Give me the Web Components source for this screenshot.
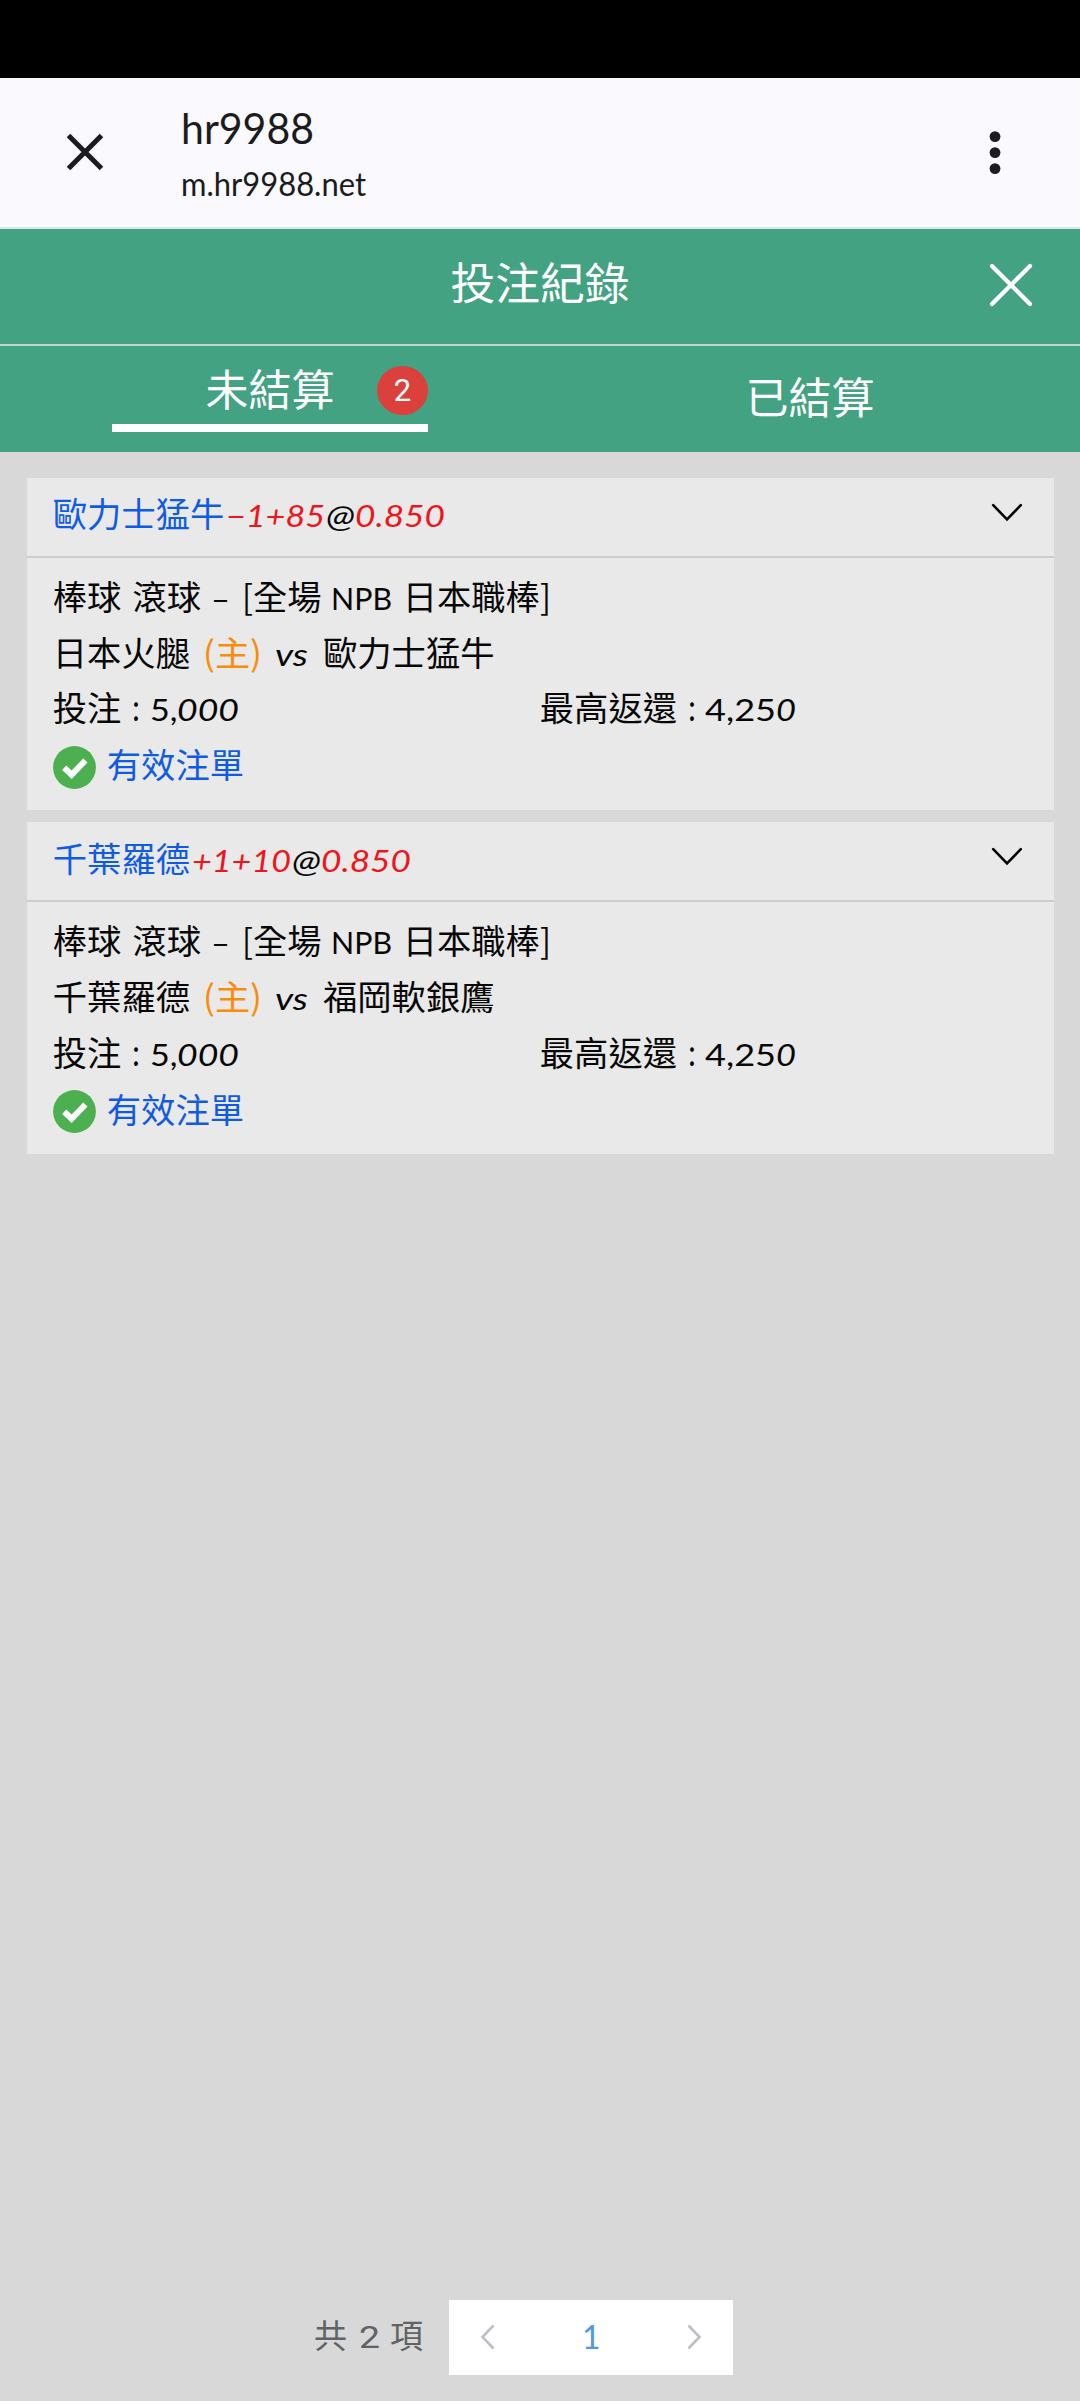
<!DOCTYPE html>
<html lang="zh-Hant">
<head>
<meta charset="utf-8">
<title>投注紀錄</title>
<style>
html,body{margin:0;padding:0}
body{width:1080px;height:2401px;overflow:hidden;background:#d8d8d8;font-family:"Noto Sans CJK TC",sans-serif}
</style>
</head>
<body>
<bet-app></bet-app>
<script>
const define = (name, html, ready) => customElements.define(name, class extends HTMLElement {
  connectedCallback() {
    if (this.shadowRoot) return;
    const t = document.createElement('template');
    t.innerHTML = html;
    this.attachShadow({ mode: 'open' }).append(t.content.cloneNode(true));
    if (ready) ready.call(this, this.shadowRoot);
  }
});

/* A run of text whose glyphs are stretched to the width given by "w". */
define('text-run', `<style>
:host{display:inline-block;white-space:pre;flex:none}
:host([latin]){font-family:Lato,"Noto Sans CJK TC",sans-serif;font-size:31px}
:host([italic]){font-style:italic}
span{display:inline-block;transform-origin:0 50%}
</style><span><slot></slot></span>`, function (root) {
  const w = +this.getAttribute('w');
  const s = root.querySelector('span');
  if (this.hasAttribute('gap')) this.style.marginLeft = this.getAttribute('gap') + 'px';
  if (w) {
    const natural = s.getBoundingClientRect().width;
    this.style.width = w + 'px';
    if (natural) s.style.transform = `scaleX(${w / natural})`;
  }
});

define('browser-bar', `<style>
:host{display:flex;height:149px;background:#f9f9fe;border-bottom:2px solid #d9eae6;color:#1b1b20;align-items:flex-start;box-sizing:content-box}
.close{margin:55px 0 0 66px;width:38px;height:38px}
.t{margin:10px 0 0 76.5px;flex:1;display:flex;flex-direction:column;align-items:flex-start}
.a{font:42.5px/80px Lato,sans-serif;height:80px}
.b{font:32px/40px Lato,sans-serif;height:40px;margin-top:-4px}
.more{margin:53px 79px 0 0;width:12px;height:44px}
svg{display:block}
</style>
<svg class="close" viewBox="0 0 38 38"><path d="M2.5 2.5l33 33M35.5 2.5l-33 33" stroke="#1b1b20" stroke-width="5" fill="none"/></svg>
<div class="t"><text-run class="a" w="133">hr9988</text-run><text-run class="b" w="185">m.hr9988.net</text-run></div>
<svg class="more" viewBox="0 0 12 44"><g fill="#1b1b20"><circle cx="6" cy="5.6" r="5.4"/><circle cx="6" cy="21.6" r="5.4"/><circle cx="6" cy="37.6" r="5.4"/></g></svg>`);

define('title-bar', `<style>
:host{display:grid;grid-template-columns:1fr auto 1fr;align-items:start;height:114.5px;background:#42a281;border-bottom:2.5px solid #c3d6ce;color:#fff}
b{grid-column:2;font:400 44.8px/66px "Noto Sans CJK TC",sans-serif;margin-top:19px}
svg{justify-self:end;width:44px;height:44px;margin:33.5px 47px 0 0}
</style><b><slot></slot></b>
<svg viewBox="0 0 44 44"><path d="M3 3l38 38M41 3L3 41" stroke="#fff" stroke-width="4.2" stroke-linecap="round"/></svg>`);

define('tab-item', `<style>
:host{display:flex;flex:1;justify-content:center;color:#fff;font:43px/62px "Noto Sans CJK TC",sans-serif;height:106px}
.in{margin-top:18px}
:host([count]) .in{box-sizing:border-box;width:316px;height:86px;margin-top:0;border-bottom:8px solid #fff;display:grid;grid-template-columns:1fr auto 1fr;align-items:start}
:host([count]) .w{grid-column:2;margin-top:10px}
i{display:none}
:host([count]) i{justify-self:end;display:block;width:51px;height:49px;margin-top:20px;border-radius:50%;background:#dc403c;font:normal 31px/49px Roboto,sans-serif;text-align:center}
</style><div class="in"><span class="w"><slot></slot></span><i></i></div>`, function (root) {
  root.querySelector('i').textContent = this.getAttribute('count') || '';
});

define('tab-strip', `<style>:host{display:flex;height:106px;background:#42a281}</style><slot></slot>`);

define('bet-card', `<style>
:host{display:flex;flex-direction:column;height:332px;background:#e9e9e9;color:#080808;font:34.3px/50px "Noto Sans CJK TC",sans-serif;margin-bottom:12.7px}
header{display:flex;box-sizing:border-box;height:80px;border-bottom:2.5px solid #cdcdcd;padding:9.5px 31px 0 26px;justify-content:space-between}
.row{display:flex;align-items:baseline;height:50px;padding-left:26px;white-space:pre}
.r1{margin-top:12px}.r2{margin-top:6px}.r3{margin-top:5.5px}.r4{margin-top:7px;align-items:flex-start}
.half{flex:none;width:487px}
.blue{color:#105be4}.red{color:#ee151b}.home{color:#fb8c0b}
.chev{width:32px;height:20px;margin-top:14.5px}
.ok{width:43px;height:43px;margin:7.5px 11px 0 0}
</style>
<header><div><span class="blue"><slot name="pick"></slot></span><text-run class="red" latin italic w="99" gap="2"></text-run><text-run latin italic w="29" gap="1">@</text-run><text-run class="red" latin italic w="90" gap="0">0.850</text-run></div>
<svg class="chev" viewBox="0 0 32 20"><path d="M2.2 3.2L16 17.3 29.8 3.2" fill="none" stroke="#080808" stroke-width="2.6" stroke-linecap="round"/></svg></header>
<div class="row r1">棒球<text-run w="11"> </text-run>滾球<text-run latin w="19" gap="10">–</text-run><text-run w="11" gap="12">[</text-run>全場<text-run latin w="61" gap="9">NPB</text-run><text-run w="11"> </text-run>日本職棒<text-run w="11">]</text-run></div>
<div class="row r2"><slot name="a"></slot><text-run class="home" w="59" gap="13">(主)</text-run><text-run latin italic w="33" gap="13">vs</text-run><text-run w="15"> </text-run><slot name="b"></slot></div>
<div class="row r3"><div class="half">投注<text-run w="8" gap="10.5">:</text-run><text-run latin w="27.5" gap="10">5,</text-run><text-run latin italic w="62">000</text-run></div><div>最高返還<text-run w="8" gap="10.5">:</text-run><text-run latin w="71" gap="9">4,25</text-run><text-run latin italic w="20">0</text-run></div></div>
<div class="row r4"><svg class="ok" viewBox="0 0 43 43"><circle cx="21.5" cy="21.5" r="21.4" fill="#4caf50"/><path d="M11.2 21.8l7.4 7 13.8-14.3" fill="none" stroke="#fff" stroke-width="6"/></svg><span class="blue">有效注單</span></div>`, function (root) {
  const run = root.querySelector('text-run.red');
  const line = document.createElement('text-run');
  for (const a of run.attributes) line.setAttribute(a.name, a.value);
  line.textContent = this.getAttribute('line');
  run.replaceWith(line);
});

define('page-nav', `<style>
:host{display:flex;height:74.7px;align-items:center;color:#606266;font:33px/50px "Noto Sans CJK TC",sans-serif}
.n{display:flex;align-items:baseline;margin:-4px 26px 0 314px;width:109.3px}
.box{display:flex;box-sizing:border-box;width:284px;height:74.7px;background:#fff;align-items:center;justify-content:space-between;padding:0 31px}
svg{width:16px;height:28px}
.one{color:#5297e3}
</style><div class="n">共<text-run w="21" gap="11.5" style="font:32px/50px Roboto,sans-serif">2</text-run><span style="margin-left:10.5px">項</span></div>
<div class="box"><svg viewBox="0 0 16 28"><path d="M13.5 2.5L2.5 14l11 11.5" fill="none" stroke="#bcbfc6" stroke-width="2.6"/></svg><text-run class="one" latin style="font-size:32px">1</text-run><svg viewBox="0 0 16 28"><path d="M2.5 2.5L13.5 14l-11 11.5" fill="none" stroke="#bcbfc6" stroke-width="2.6"/></svg></div>`);

define('bet-app', `<style>
:host{display:flex;flex-direction:column;width:1080px;height:2401px;background:#d8d8d8}
.status{height:78px;background:#000;flex:none}
browser-bar,title-bar,tab-strip{flex:none}
.list{flex:1;padding:26.3px 26.5px 0 26.8px}
page-nav{margin-bottom:26.3px}
</style>
<div class="status"></div>
<browser-bar></browser-bar>
<title-bar>投注紀錄</title-bar>
<tab-strip><tab-item count="2">未結算</tab-item><tab-item>已結算</tab-item></tab-strip>
<div class="list">
<bet-card line="−1+85"><span slot="pick">歐力士猛牛</span><span slot="a">日本火腿</span><span slot="b">歐力士猛牛</span></bet-card>
<bet-card line="+1+10"><span slot="pick">千葉羅德</span><span slot="a">千葉羅德</span><span slot="b">福岡軟銀鷹</span></bet-card>
</div>
<page-nav></page-nav>`);
</script>
</body>
</html>
